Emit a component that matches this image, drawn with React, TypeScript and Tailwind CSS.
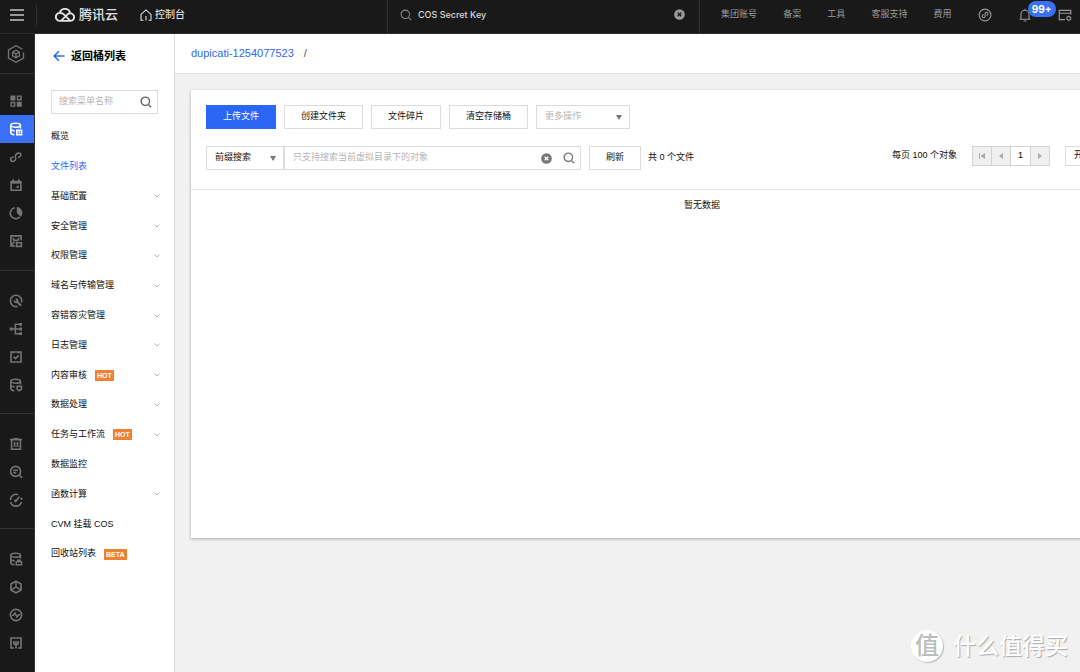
import type { ReactNode } from "react";
import clsx from "clsx";

const Icon = ({ children, className = "size-3.5" }: { children: ReactNode; className?: string }) => (
  <svg viewBox="0 0 14 14" fill="none" stroke="currentColor" strokeWidth={1.6} className={clsx("shrink-0", className)} aria-hidden="true">
    {children}
  </svg>
);

const SearchIcon = ({ className, strokeWidth = 1.6 }: { className?: string; strokeWidth?: number }) => (
  <Icon className={className}>
    <circle cx="6.2" cy="6.2" r="4.9" strokeWidth={strokeWidth} />
    <path d="M9.8 9.8 13 13" strokeWidth={strokeWidth} />
  </Icon>
);

const ClearIcon = ({ className, cross }: { className?: string; cross: string }) => (
  <svg viewBox="0 0 12 12" className={clsx("size-[11px] shrink-0", className)} aria-hidden="true">
    <circle cx="6" cy="6" r="5.8" fill="currentColor" />
    <path d="M4 4l4 4M8 4 4 8" stroke={cross} strokeWidth="1.5" />
  </svg>
);

const Caret = ({ className }: { className?: string }) => (
  <svg viewBox="0 0 6 5" className={clsx("pointer-events-none absolute h-[5px] w-1.5 text-[#777]", className)} aria-hidden="true">
    <path d="M0 0h6L3 5z" fill="currentColor" />
  </svg>
);

const Database = ({ children }: { children: ReactNode }) => (
  <Icon>
    <ellipse cx="6.6" cy="3.2" rx="4.8" ry="2" />
    <path d="M1.8 3.2v7.6c0 .9 1.4 1.7 3.6 2M11.4 3.2v3.2M1.8 7c0 .9 1.6 1.7 3.8 1.9" />
    {children}
  </Icon>
);

type RailItem = { label: string; icon: ReactNode; active?: boolean };

const railGroups: RailItem[][] = [
  [
    {
      label: "总览",
      icon: (
        <Icon>
          <path d="M1.4 1.4h5v5h-5zM7.8 7.8h5v5h-5z" fill="currentColor" stroke="none" />
          <path d="M8.5 2.1h3.6v3.6H8.5zM2.1 8.5h3.6v3.6H2.1z" strokeWidth="1.4" />
        </Icon>
      ),
    },
    {
      label: "对象存储",
      active: true,
      icon: (
        <Database>
          <path d="M7.8 8.4h4.8v4.4H7.8zM10.2 9.6v2" />
        </Database>
      ),
    },
    {
      label: "链接",
      icon: (
        <Icon>
          <path d="M4.6 7.2h-.8a2.1 2.1 0 0 0 0 4.2c1.4 0 2.6-.8 2.9-2.2.3-1.5-.6-1.8-.4-3.2C6.600 4.200 8 3 10 2.900a1.900 1.900 0 0 1 .9 3.600c-.5.5-1.200.8-2 .9" strokeWidth="1.5" />
        </Icon>
      ),
    },
    {
      label: "日历",
      icon: (
        <Icon>
          <path d="M2.1 3.6h9.8v8.6H2.1z" />
          <path d="M2 4.5h10" strokeWidth="2.4" />
          <path d="M4.2 1.2v3M9.8 1.2v3" />
          <path d="M7.6 7.8h2.2V10H7.6z" fill="currentColor" stroke="none" />
        </Icon>
      ),
    },
    {
      label: "统计",
      icon: (
        <Icon>
          <path d="M5.8 1.8A5.5 5.5 0 1 0 10.8 11" />
          <path d="M7.8 1v6l4 4A6 6 0 0 0 7.8 1z" fill="currentColor" stroke="none" />
        </Icon>
      ),
    },
    {
      label: "镜像",
      icon: (
        <Icon>
          <path d="M6.2 12H1.9V1.9h10.2v4.3M2 11.400l3.400-3.600M4.400 3.800v1.400c0 .8 1.200 1.200 2.600 1.200s2.600-.4 2.600-1.200V3.800" />
          <path d="M7.6 8.8h4.8v3.6H7.6z" />
        </Icon>
      ),
    },
  ],
  [
    {
      label: "运维",
      icon: (
        <Icon>
          <path d="M8.600 12.400A5.700 5.700 0 1 1 12.500 8.600" />
          <path d="M6.2 4.6a2.3 2.3 0 0 1 3.2 2.9L12.8 11l-1.4 1.4-3.5-3.500a2.300 2.300 0 0 1-3-3.100l1.600 1.500 1.100-1.100z" fill="currentColor" stroke="none" />
        </Icon>
      ),
    },
    {
      label: "拓扑",
      icon: (
        <Icon>
          <path d="M1 7h11M11 2.3H6.400v9.400H11" />
          <path d="M.8 5.600h2.800v2.800H.8zM10.300.9H13v2.800h-2.700zM10.300 5.600H13v2.800h-2.700zM10.300 10.300H13v2.800h-2.700z" fill="currentColor" stroke="none" />
        </Icon>
      ),
    },
    {
      label: "任务",
      icon: (
        <Icon>
          <path d="M2 2h10v10H2zM4.600 6.600l2 1.900 3-3.100M4.400 2v1.600M9.600 2v1.600" />
        </Icon>
      ),
    },
    {
      label: "数据库",
      icon: (
        <Database>
          <path d="M8.2 8.2h4.2v3L10.300 12.800l-2.100-1.600z" />
        </Database>
      ),
    },
  ],
  [
    {
      label: "回收",
      icon: (
        <Icon>
          <path d="M1 2.6h12M2.600 2.600v9.600h8.800V2.600M5.600 5v5M8.400 5v5" />
          <path d="M4.400 1.400h5.200" strokeWidth="1" />
        </Icon>
      ),
    },
    {
      label: "日志检索",
      icon: (
        <Icon>
          <circle cx="6.6" cy="6.4" r="5" />
          <path d="M10.200 10 13 12.800M4.300 5.200h4.600M4.300 7.600h3" />
        </Icon>
      ),
    },
    {
      label: "监控",
      icon: (
        <Icon>
          <path d="M9 1.700A5.600 5.600 0 0 0 1.400 7M12.200 4.600c.4.8.5 1.600.4 2.400M1.600 9a5.600 5.600 0 0 0 10.800 0M6.600 8.400l3.800-4.600" />
          <circle cx="6.5" cy="8" r="1.4" fill="currentColor" stroke="none" />
        </Icon>
      ),
    },
  ],
  [
    {
      label: "数据安全",
      icon: (
        <Database>
          <path d="M7.200 9.800h5.400v2.900H7.200zM8.600 9.600V8.200h2.600v1.400" strokeWidth="1.400" />
        </Database>
      ),
    },
    {
      label: "容器",
      icon: (
        <Icon>
          <path d="M7 1.200 12.100 4v6L7 12.800 1.900 10V4z" />
          <path d="M7 1.200v5.600M7 6.800l-4.400 2.800M7 6.800l4.400 2.800" strokeWidth="1.400" />
        </Icon>
      ),
    },
    {
      label: "性能",
      icon: (
        <Icon>
          <circle cx="7" cy="7" r="5.6" />
          <path d="M2.800 7.400h1.600L6 5l2 4 1.400-2.200h1.800" strokeWidth="1.400" />
        </Icon>
      ),
    },
    {
      label: "接入",
      icon: (
        <Icon>
          <path d="M4.800 12H2V2h10v10H9.200M7 12.600V8.400M4.700 5v1.400c0 1.200 1 2 2.300 2s2.300-.8 2.300-2V5M7 5v3" />
        </Icon>
      ),
    },
  ],
];

type MenuItem = { label: string; badge?: string; expandable?: boolean; active?: boolean };

const menu: MenuItem[] = [
  { label: "概览" },
  { label: "文件列表", active: true },
  { label: "基础配置", expandable: true },
  { label: "安全管理", expandable: true },
  { label: "权限管理", expandable: true },
  { label: "域名与传输管理", expandable: true },
  { label: "容错容灾管理", expandable: true },
  { label: "日志管理", expandable: true },
  { label: "内容审核", badge: "HOT", expandable: true },
  { label: "数据处理", expandable: true },
  { label: "任务与工作流", badge: "HOT", expandable: true },
  { label: "数据监控" },
  { label: "函数计算", expandable: true },
  { label: "CVM 挂载 COS" },
  { label: "回收站列表", badge: "BETA" },
];

const Header = () => (
  <header className="flex h-[34px] shrink-0 border-b border-[#2c2c2c] bg-[#191919] text-[9px] text-[#9a9a9a]">
    <div className="flex w-[387px] shrink-0 items-center pb-1">
      <button type="button" aria-label="菜单" className="flex h-5 w-[37px] items-center border-r border-[#333] pl-2.5 text-[#c4c4c4]">
        <svg viewBox="0 0 14 12" className="h-3 w-3.5" stroke="currentColor" strokeWidth="1.3" aria-hidden="true">
          <path d="M0 1h14M0 6h14M0 11h14" />
        </svg>
      </button>
      <a href="#" className="ml-[18px] flex items-center gap-1 text-[13px] font-medium text-[#e2e2e2]">
        <svg viewBox="0 0 20 14" className="h-3.5 w-5" fill="none" stroke="currentColor" strokeWidth="1.9" aria-hidden="true">
          <path d="M5 12.9a4 4 0 1 1 .7-7.9c1.4 0 2.4.6 3.4 1.600l6.200 6.300M4.800 5a5.300 5.300 0 0 1 10.300-.1M5 12.900h10.400a3.800 3.800 0 1 0-2.800-6.500L6 12.900" />
        </svg>
        腾讯云
      </a>
      <a href="#" className="ml-[22px] flex items-center gap-[3px] text-[10px] font-medium text-[#dedede]">
        <svg viewBox="0 0 12 12" className="size-3" fill="none" stroke="currentColor" strokeWidth="1.1" aria-hidden="true">
          <path d="M3.400 11.200H1V5.400L6 .9l5 4.500v5.800H8.600M6 7v4.400" />
        </svg>
        控制台
      </a>
    </div>

    <label className="flex min-w-0 flex-1 items-center border-x border-[#333] pr-3.5 pb-1 pl-3">
      <SearchIcon className="size-3 text-[#8c8c8c]" strokeWidth={1.2} />
      <input aria-label="搜索" defaultValue="COS Secret Key" className="ml-1.5 min-w-0 flex-1 bg-transparent font-[Inter] text-[9px] font-medium text-[#d8d8d8] outline-none" />
      <button type="button" aria-label="清除">
        <ClearIcon className="text-[#9a9a9a]" cross="#191919" />
      </button>
    </label>

    <nav className="flex w-[380px] shrink-0 items-center justify-between pr-2 pb-1 pl-[21px]">
      <a href="#">集团账号</a>
      <a href="#">备案</a>
      <a href="#">工具</a>
      <a href="#">客服支持</a>
      <a href="#">费用</a>
      <button type="button" aria-label="链接">
        <Icon>
          <circle cx="7" cy="7" r="5.9" strokeWidth="1.1" />
          <path d="M5.600 6.600c-2 .2-1.900 3.200 0 3.200 1.500 0 1.600-1.200 1.500-2.800S7 4.200 8.600 4.200c1.800 0 1.800 3 0 3.200" strokeWidth="1.1" />
        </Icon>
      </button>
      <button type="button" aria-label="消息 99+" className="relative">
        <Icon>
          <path d="M1.600 11.200h10.800M3 11V6.200a4 4 0 0 1 8 0V11M5.600 13h2.800M7 .8v1.400" strokeWidth="1.1" />
        </Icon>
        <span className="absolute -top-[7px] left-2.5 rounded-full bg-[#3a70f5] px-1 font-[Inter] text-[10px] leading-4 font-bold text-white">99+</span>
      </button>
      <button type="button" aria-label="设置">
        <Icon>
          <path d="M7 11.600H1.200V2.400h11.600v4M1.200 5.200h11.600" strokeWidth="1.1" />
          <path d="M10.800 8.200 12.600 9.200v2.200l-1.800 1-1.800-1V9.200z" strokeWidth="1.1" />
        </Icon>
      </button>
    </nav>
  </header>
);

const Rail = () => (
  <nav aria-label="产品" className="w-[35px] shrink-0 border-r border-[#333] bg-[#191919] text-[#757575]">
    <a href="#" aria-label="云产品" className="flex h-10 items-center border-b border-[#333] pl-[7px]">
      <svg viewBox="0 0 18 18" className="size-[18px]" fill="none" stroke="currentColor" strokeWidth="1.3" aria-hidden="true">
        <path d="M15.500 4.300 9 .8 1.500 5v8L9 17.200l7.500-4.200V7.500" />
        <path d="M9 5.200l3.400 1.900v3.800L9 12.800l-3.400-1.900V7.100zM5.600 7.100 9 9l3.400-1.900M9 9v3.800" />
      </svg>
    </a>
    {railGroups.map((group, i) => (
      <ul key={i} className={clsx("border-[#333]", i === 0 ? "pt-[13px]" : "pt-4", i < railGroups.length - 1 && "border-b", i === 0 ? "pb-[15px]" : "pb-3.5")}>
        {group.map((item) => (
          <li key={item.label}>
            <a href="#" aria-label={item.label} className={clsx("flex h-7 items-center pl-[9px]", item.active && "bg-[#3a70f5] text-white")}>
              {item.icon}
            </a>
          </li>
        ))}
      </ul>
    ))}
  </nav>
);

const Sidebar = () => (
  <aside className="w-[140px] shrink-0 border-r border-[#dcdcdc] bg-white px-4">
    <a href="#" className="mt-3 ml-0.5 flex h-5 items-center gap-1.5 text-[11px] font-bold text-black">
      <Icon className="size-3 text-[#2d68f5]">
        <path d="M13.500 7H1.500M6.800 1.500 1.300 7l5.500 5.500" strokeWidth="1.800" />
      </Icon>
      返回桶列表
    </a>
    <label className="mt-6 flex h-6 items-center border border-[#dcdcdc] pr-[5px] pl-[7px]">
      <input aria-label="搜索菜单" placeholder="搜索菜单名称" className="min-w-0 flex-1 outline-none placeholder:text-[#b5b5b5]" />
      <SearchIcon className="size-3 text-[#666]" />
    </label>
    <ul className="mt-2 -mr-0.5 grid h-[447px] auto-rows-fr">
      {menu.map((item) => (
        <li key={item.label}>
          <a href="#" className={clsx("flex h-full items-center", item.active ? "text-[#2d68f5]" : "text-[#111]")}>
            {item.label}
            {item.badge && (
              <span className="ml-2 bg-[#f08133] px-0.5 text-[7px] leading-[11px] font-bold text-white">{item.badge}</span>
            )}
            {item.expandable && (
              <svg viewBox="0 0 6 4" className="ml-auto h-1 w-1.5" fill="none" stroke="#b5b5b5" aria-hidden="true">
                <path d="M.6.6 3 3 5.400.6" />
              </svg>
            )}
          </a>
        </li>
      ))}
    </ul>
  </aside>
);

const Pager = () => (
  <div className="mr-[15px] flex h-5 border border-[#d2d2d2] text-[#aaa]">
    <button type="button" aria-label="首页" className="flex w-[19px] items-center justify-center border-r border-[#d2d2d2] bg-[#f0f0f0]">
      <svg viewBox="0 0 6 6" className="size-1.5" fill="currentColor" aria-hidden="true">
        <path d="M0 0h1v6H0zM6 0v6L1.500 3z" />
      </svg>
    </button>
    <button type="button" aria-label="上一页" className="flex w-[19px] items-center justify-center border-r border-[#d2d2d2] bg-[#f0f0f0]">
      <svg viewBox="0 0 4 6" className="h-1.5 w-1" fill="currentColor" aria-hidden="true">
        <path d="M4 0v6L0 3z" />
      </svg>
    </button>
    <button type="button" className="w-[19px] font-medium text-black">1</button>
    <button type="button" aria-label="下一页" className="flex w-[19px] items-center justify-center border-l border-[#d2d2d2] bg-[#f0f0f0]">
      <svg viewBox="0 0 4 6" className="h-1.5 w-1" fill="currentColor" aria-hidden="true">
        <path d="M0 0v6l4-3z" />
      </svg>
    </button>
  </div>
);

const FilePanel = () => (
  <section className="mt-4 ml-4 min-h-[448px] min-w-[1022px] bg-white shadow-[0_1px_3px_rgba(0,0,0,0.3)]">
    <div className="border-b border-[#e5e5e5] px-[15px] pt-[15px] pb-[19px]">
      <div className="flex gap-2">
        <button type="button" className="h-6 w-[70px] bg-[#2b66f6] text-white">上传文件</button>
        <button type="button" className="h-6 w-[79px] border border-[#dcdcdc]">创建文件夹</button>
        <button type="button" className="h-6 w-[70px] border border-[#dcdcdc]">文件碎片</button>
        <button type="button" className="h-6 w-[79px] border border-[#dcdcdc]">清空存储桶</button>
        <div className="relative">
          <select aria-label="更多操作" className="h-6 w-[94px] appearance-none border border-[#dcdcdc] pl-2 text-[#b5b5b5]">
            <option>更多操作</option>
          </select>
          <Caret className="top-2.5 right-2" />
        </div>
      </div>

      <div className="mt-[17px] flex items-center">
        <div className="relative">
          <select aria-label="搜索方式" className="h-6 w-[78px] appearance-none border border-[#dcdcdc] pl-2">
            <option>前缀搜索</option>
          </select>
          <Caret className="top-2.5 right-2" />
        </div>
        <label className="flex h-6 w-[297px] items-center border border-[#dcdcdc] pr-[5px] pl-2">
          <input aria-label="搜索文件" placeholder="只支持搜索当前虚拟目录下的对象" className="min-w-0 flex-1 outline-none placeholder:text-[#b5b5b5]" />
          <button type="button" aria-label="清除" className="mr-[11px]">
            <ClearIcon className="text-[#777]" cross="#fff" />
          </button>
          <SearchIcon className="size-3 text-[#777]" />
        </label>
        <button type="button" className="ml-2 h-6 w-[52px] border border-[#dcdcdc]">刷新</button>
        <span className="ml-[7px]">共 0 个文件</span>

        <div className="ml-auto flex items-center self-start">
          <span className="mr-[15px]">每页 100 个对象</span>
          <Pager />
          <button type="button" className="h-5 w-[133px] border border-[#dcdcdc] pl-2 text-left">开</button>
        </div>
      </div>
    </div>
    <p className="py-2 text-center leading-[14px]">暂无数据</p>
  </section>
);

const Watermark = () => (
  <div className="pointer-events-none absolute right-3 bottom-2.5 flex items-center gap-2.5 text-white">
    <span className="flex size-8 items-center justify-center rounded-full bg-white text-2xl font-medium text-[#bdbdbd] shadow-[1px_1px_1px_#bbb]">值</span>
    <span className="text-[23px] leading-8 font-medium [text-shadow:1px_1px_1px_#aaa]">什么值得买</span>
  </div>
);

export default function App() {
  return (
    <div className="relative flex min-h-screen flex-col overflow-hidden bg-[#f1f1f1] font-['Liberation_Sans','Noto_Sans_CJK_SC',sans-serif] text-[9px] text-[#111]">
      <Header />
      <div className="flex flex-1">
        <Rail />
        <Sidebar />
        <main className="min-w-0 flex-1 overflow-hidden">
          <div className="flex h-10 items-center gap-2.5 border-b border-[#e2e2e2] bg-white pl-4 text-[11px]">
            <a href="#" className="text-[#2d68f5]">dupicati-1254077523</a>
            <span className="text-[#555]">/</span>
          </div>
          <FilePanel />
        </main>
      </div>
      <Watermark />
    </div>
  );
}
